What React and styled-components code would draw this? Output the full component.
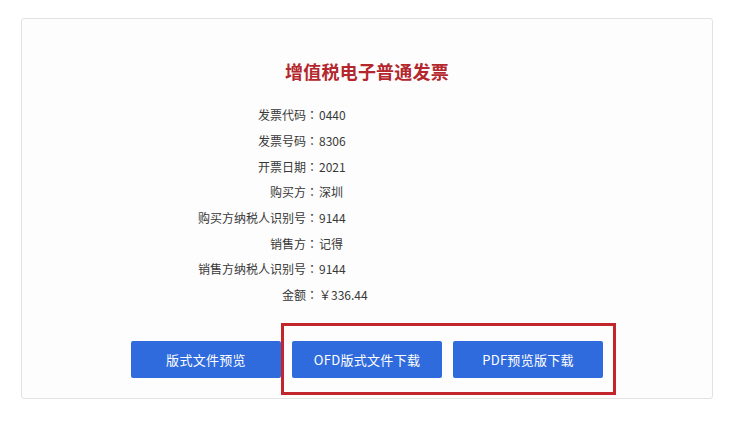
import styled, { createGlobalStyle } from "styled-components";

const Global = createGlobalStyle`
  body {
    margin: 0;
    background: #ffffff;
    font-family: "Noto Sans CJK SC", "Noto Sans", sans-serif;
  }
`;

const rows = [
  { label: "发票代码", value: "0440" },
  { label: "发票号码", value: "8306" },
  { label: "开票日期", value: "2021" },
  { label: "购买方", value: "深圳" },
  { label: "购买方纳税人识别号", value: "9144" },
  { label: "销售方", value: "记得" },
  { label: "销售方纳税人识别号", value: "9144" },
  { label: "金额", value: "￥336.44" },
];

export default function App() {
  return (
    <>
      <Global />
      <Card>
        <Title>增值税电子普通发票</Title>
        <InfoList>
          {rows.map((r) => (
            <Row key={r.label}>
              <Label>
                {r.label}
                <Colon>：</Colon>
              </Label>
              <Value>{r.value}</Value>
            </Row>
          ))}
        </InfoList>
        <Buttons>
          <Button>版式文件预览</Button>
          <Highlight>
            <Button>OFD版式文件下载</Button>
            <Button>PDF预览版下载</Button>
          </Highlight>
        </Buttons>
      </Card>
    </>
  );
}

const Card = styled.div`
  box-sizing: border-box;
  width: 692px;
  height: 381px;
  margin: 18px 0 0 21px;
  padding-top: 40px;
  background: #fdfdfd;
  border: 1px solid #e2e2e2;
  border-radius: 3px;
  display: flex;
  flex-direction: column;
  align-items: center;
`;

const Title = styled.h1`
  margin: 0;
  font-size: 18px;
  line-height: 24px;
  font-weight: 700;
  color: #b3272d;
  letter-spacing: 0.2px;
`;

const InfoList = styled.div`
  align-self: stretch;
  margin-top: 19px;
  display: flex;
  flex-direction: column;
`;

const Row = styled.div`
  display: grid;
  grid-template-columns: 296px 1fr;
  height: 25.7px;
  align-items: center;
  font-size: 12px;
  color: #383838;
`;

const Label = styled.span`
  text-align: right;
  white-space: nowrap;
`;

const Colon = styled.span`
  font-family: "Noto Sans CJK JP", sans-serif;
`;

const Value = styled.span`
  white-space: nowrap;
  padding-left: 1px;
`;

const Buttons = styled.div`
  margin-top: 33px;
  display: flex;
  gap: 11px;
`;

const Highlight = styled.div`
  position: relative;
  display: flex;
  gap: 11px;
  &::after {
    content: "";
    position: absolute;
    top: -18px;
    left: -11px;
    right: -13px;
    bottom: -17px;
    border: 3px solid #c3252d;
    pointer-events: none;
  }
`;

const Button = styled.button`
  width: 150px;
  height: 37px;
  border: none;
  border-radius: 2px;
  background: #2f6bdc;
  color: #ffffff;
  font-family: "Noto Sans CJK SC", "Noto Sans", sans-serif;
  font-size: 13px;
  letter-spacing: 0.3px;
  cursor: pointer;
`;
